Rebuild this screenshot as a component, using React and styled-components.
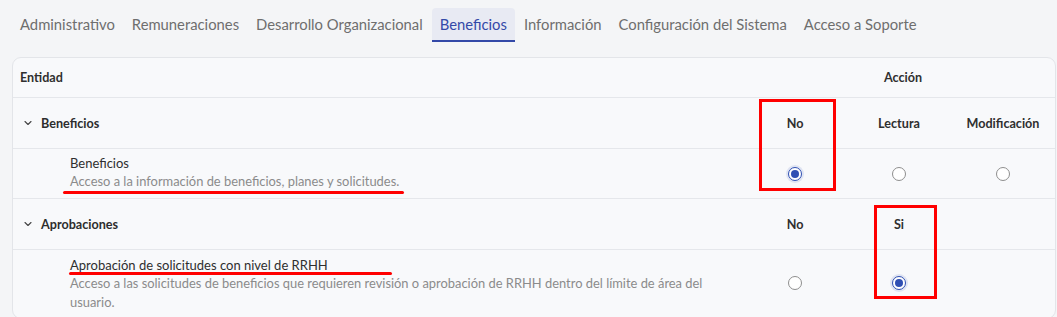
import React from "react";
import styled, { createGlobalStyle, css } from "styled-components";

const Global = createGlobalStyle`
  html, body { margin: 0; padding: 0; background: #f4f5f7; }
  body { font-family: Lato, "Open Sans", sans-serif; color: #2b2b2b; }
  * { box-sizing: border-box; }
`;

const Page = styled.div`
  width: 1057px;
  height: 317px;
  overflow: hidden;
  padding: 8px 1px 0 12px;
`;

const Tabs = styled.nav`
  display: flex;
  align-items: stretch;
  gap: 1px;
  height: 34px;
  margin-bottom: 15px;
`;

const Tab = styled.div`
  display: flex;
  align-items: center;
  padding: 0 8px;
  font-size: 14.8px;
  color: #6e6e6e;
  border-radius: 4px 4px 0 0;
  border-bottom: 2px solid transparent;
  white-space: nowrap;
  ${(p) =>
    p.$active &&
    css`
      background: #e8eaf3;
      color: #3449a8;
      border-bottom-color: #3449a8;
    `}
`;

const Card = styled.section`
  position: relative;
  background: #f8f9fb;
  border: 1px solid #e3e5e9;
  border-radius: 9px;
  height: 262px;
  overflow: hidden;
`;

const Row = styled.div`
  display: grid;
  grid-template-columns: 1fr 104px 104px 104px;
  align-items: center;
  height: ${(p) => p.$h}px;
  border-bottom: 1px solid #e5e7eb;
  &:last-child { border-bottom: none; }
`;

const HeadCell = styled.div`
  font-size: 12.6px;
  font-weight: 700;
  color: #2f2f2f;
  padding-left: ${(p) => p.$pad || 0}px;
  text-align: ${(p) => (p.$center ? "center" : "left")};
  grid-column: ${(p) => p.$span || "auto"};
`;

const GroupCell = styled.div`
  display: flex;
  align-items: center;
  gap: 8px;
  padding-left: 10px;
  font-size: 12.6px;
  font-weight: 700;
  color: #2d2d2d;
`;

const Chevron = styled.svg`
  width: 10px;
  height: 10px;
  flex: none;
`;

const ItemCell = styled.div`
  padding: 0 30px 0 57px;
  align-self: start;
  padding-top: ${(p) => p.$top}px;
`;

const ItemTitle = styled.div`
  font-size: 13px;
  color: #2f2f2f;
  line-height: 18px;
`;

const ItemDesc = styled.div`
  font-size: 12.9px;
  color: #8b8b8b;
  line-height: 18.5px;
`;

const RadioCell = styled.div`
  display: flex;
  justify-content: center;
  align-self: ${(p) => (p.$top ? "start" : "center")};
  padding-top: ${(p) => p.$top || 0}px;
`;

const Radio = styled.span`
  width: 14px;
  height: 14px;
  border-radius: 50%;
  background: #fff;
  border: 1px solid ${(p) => (p.$on ? "#2f4fb3" : "#8e8e8e")};
  display: flex;
  align-items: center;
  justify-content: center;
  ${(p) =>
    p.$on &&
    css`
      border-width: 1.5px;
      box-shadow: 0 0 0 2px rgba(49, 81, 180, 0.12);
      &::after {
        content: "";
        width: 8px;
        height: 8px;
        border-radius: 50%;
        background: #2f4fb3;
      }
    `}
`;

const Mark = styled.div`
  position: absolute;
  border: 3px solid #ff0000;
  pointer-events: none;
`;

const Underline = styled.div`
  position: absolute;
  height: 3px;
  border-radius: 2px;
  background: #ff0000;
  pointer-events: none;
`;

const Annotations = styled.div`
  position: absolute;
  inset: 0;
  pointer-events: none;
`;

const Body = styled.div`
  position: relative;
`;

const tabs = [
  "Administrativo",
  "Remuneraciones",
  "Desarrollo Organizacional",
  "Beneficios",
  "Información",
  "Configuración del Sistema",
  "Acceso a Soporte",
];

const Down = () => (
  <Chevron viewBox="0 0 10 10">
    <path d="M2 3.5 L5 6.5 L8 3.5" fill="none" stroke="#444" strokeWidth="1.1" strokeLinecap="round" strokeLinejoin="round" />
  </Chevron>
);

export default function App() {
  return (
    <>
      <Global />
      <Page>
        <Tabs>
          {tabs.map((t) => (
            <Tab key={t} $active={t === "Beneficios"}>
              {t}
            </Tab>
          ))}
        </Tabs>
        <Body>
          <Card>
            <Row $h={40}>
              <HeadCell $pad={7}>Entidad</HeadCell>
              <HeadCell $center $pad={8} $span="2 / span 3">Acción</HeadCell>
            </Row>
            <Row $h={51}>
              <GroupCell>
                <Down />
                Beneficios
              </GroupCell>
              <HeadCell $center>No</HeadCell>
              <HeadCell $center>Lectura</HeadCell>
              <HeadCell $center>Modificación</HeadCell>
            </Row>
            <Row $h={50}>
              <ItemCell $top={5}>
                <ItemTitle>Beneficios</ItemTitle>
                <ItemDesc>Acceso a la información de beneficios, planes y solicitudes.</ItemDesc>
              </ItemCell>
              <RadioCell>
                <Radio $on />
              </RadioCell>
              <RadioCell>
                <Radio />
              </RadioCell>
              <RadioCell>
                <Radio />
              </RadioCell>
            </Row>
            <Row $h={51}>
              <GroupCell>
                <Down />
                Aprobaciones
              </GroupCell>
              <HeadCell $center>No</HeadCell>
              <HeadCell $center>Si</HeadCell>
              <div />
            </Row>
            <Row $h={68}>
              <ItemCell $top={6}>
                <ItemTitle>Aprobación de solicitudes con nivel de RRHH</ItemTitle>
                <ItemDesc>
                  Acceso a las solicitudes de beneficios que requieren revisión o aprobación de RRHH dentro del límite de área del usuario.
                </ItemDesc>
              </ItemCell>
              <RadioCell $top={26}>
                <Radio />
              </RadioCell>
              <RadioCell $top={26}>
                <Radio $on />
              </RadioCell>
              <div />
            </Row>
          </Card>
          <Annotations>
            <Mark style={{ left: 747, top: 42, width: 77, height: 92 }} />
            <Mark style={{ left: 862, top: 148, width: 63, height: 94 }} />
            <Underline style={{ left: 51, top: 134, width: 341 }} />
            <Underline style={{ left: 57, top: 215, width: 323 }} />
          </Annotations>
        </Body>
      </Page>
    </>
  );
}
